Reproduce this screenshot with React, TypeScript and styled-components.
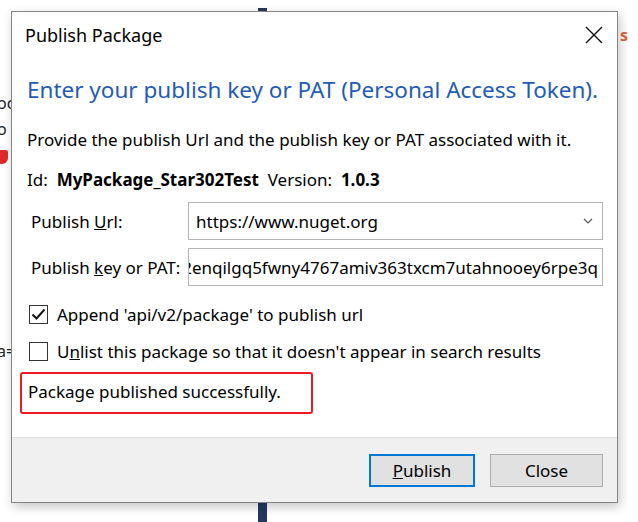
import React from "react";
import styled, { createGlobalStyle } from "styled-components";

const GlobalStyle = createGlobalStyle`
  html, body {
    margin: 0;
    padding: 0;
    background: #fff;
  }
  body {
    font-family: "Noto Sans", "Open Sans", sans-serif;
    color: #000;
  }
`;

const App = () => {
  return (
    <>
      <GlobalStyle />
      <Page>
        <Backdrop>
          <Bar />
          <Fragment style={{ top: 92 }}>oc</Fragment>
          <Fragment style={{ top: 118 }}>o</Fragment>
          <Shield style={{ top: 150 }} />
          <Fragment style={{ top: 340 }}>a=</Fragment>
          <RedFragment>s</RedFragment>
        </Backdrop>

        <Dialog>
          <TitleBar>
            <Title>Publish Package</Title>
            <CloseIcon width="18" height="18" viewBox="0 0 18 18">
              <path d="M1 1 L17 17 M17 1 L1 17" stroke="#111" strokeWidth="1.4" />
            </CloseIcon>
          </TitleBar>

          <Body>
            <Heading>Enter your publish key or PAT (Personal Access Token).</Heading>
            <Line $gap={23}>Provide the publish Url and the publish key or PAT associated with it.</Line>
            <Line $gap={18}>
              Id:&nbsp;&nbsp;<b>MyPackage_Star302Test</b>&nbsp;&nbsp;Version:&nbsp;&nbsp;<b>1.0.3</b>
            </Line>

            <Form>
              <Label>
                <span>
                  Publish <u>U</u>rl:
                </span>
              </Label>
              <Field>
                <span>https://www.nuget.org</span>
                <Chevron width="10" height="6" viewBox="0 0 10 6">
                  <path d="M1 1 L5 5 L9 1" fill="none" stroke="#555" strokeWidth="1.2" />
                </Chevron>
              </Field>

              <Label>
                <span>
                  Publish <u>k</u>ey or PAT:
                </span>
              </Label>
              <Field $clip>
                <span>2enqilgq5fwny4767amiv363txcm7utahnooey6rpe3q</span>
              </Field>
            </Form>

            <CheckRow>
              <Box>
                <svg width="15" height="13" viewBox="0 0 15 13">
                  <path d="M1.5 6.5 L5.5 10.5 L13.5 1.5" fill="none" stroke="#111" strokeWidth="2" />
                </svg>
              </Box>
              <span>Append 'api/v2/package' to publish url</span>
            </CheckRow>
            <CheckRow>
              <Box />
              <span>
                U<u>n</u>list this package so that it doesn't appear in search results
              </span>
            </CheckRow>

            <Status>Package published successfully.</Status>
          </Body>

          <Footer>
            <Button $primary>
              <span>
                <u>P</u>ublish
              </span>
            </Button>
            <Button>Close</Button>
          </Footer>
        </Dialog>
      </Page>
    </>
  );
};

/**
 * styles
 */

const Page = styled.div`
  position: relative;
  width: 638px;
  height: 522px;
  padding: 11px 0 0 11px;
  box-sizing: border-box;
  overflow: hidden;
`;

const Backdrop = styled.div`
  position: absolute;
  inset: 0;
  font-family: "Noto Sans", sans-serif;
  font-size: 16px;
`;

const Bar = styled.div`
  position: absolute;
  left: 258px;
  top: 8px;
  width: 9px;
  height: 514px;
  background: #23395d;
`;

const Fragment = styled.div`
  position: absolute;
  left: -3px;
  color: #222;
`;

const RedFragment = styled.div`
  position: absolute;
  left: 620px;
  top: 24px;
  color: #e0603a;
  font-weight: 700;
`;

const Shield = styled.div`
  position: absolute;
  left: -4px;
  width: 12px;
  height: 14px;
  background: #e02a2a;
  border-radius: 2px 2px 6px 6px;
`;

const Dialog = styled.div`
  position: relative;
  width: 607px;
  height: 492px;
  box-sizing: border-box;
  display: flex;
  flex-direction: column;
  background: #fff;
  border: 1px solid #858585;
  box-shadow: 2px 4px 10px rgba(0, 0, 0, 0.22);
`;

const TitleBar = styled.div`
  display: flex;
  align-items: center;
  justify-content: space-between;
  height: 46px;
  padding: 0 14px 0 13px;
`;

const Title = styled.div`
  font-size: 18px;
  color: #000;
`;

const CloseIcon = styled.svg`
  display: block;
`;

const Body = styled.div`
  flex: 1;
  display: flex;
  flex-direction: column;
  padding: 16px 14px 0 15px;
`;

const Heading = styled.div`
  font-size: 22.5px;
  color: #1f5cb5;
  line-height: 32px;
  white-space: nowrap;
`;

const Line = styled.div<{ $gap: number }>`
  font-size: 17px;
  line-height: 22px;
  margin-top: ${(p) => p.$gap}px;
  white-space: nowrap;

  b {
    font-weight: 700;
  }
`;

const Form = styled.div`
  display: grid;
  grid-template-columns: 161px 1fr;
  row-gap: 8px;
  margin-top: 11px;
  margin-bottom: 10px;
`;

const Label = styled.div`
  display: flex;
  align-items: center;
  padding-left: 4px;
  font-size: 17px;
  white-space: nowrap;
`;

const Field = styled.div<{ $clip?: boolean }>`
  height: 38px;
  box-sizing: border-box;
  border: 1px solid #b4b4b4;
  display: flex;
  align-items: center;
  justify-content: ${(p) => (p.$clip ? "flex-end" : "space-between")};
  padding: ${(p) => (p.$clip ? "0 4px 0 0" : "0 9px 0 7px")};
  overflow: hidden;
  white-space: nowrap;
  font-size: 17px;
`;

const Chevron = styled.svg`
  display: block;
  flex-shrink: 0;
`;

const CheckRow = styled.div`
  display: flex;
  align-items: center;
  gap: 9px;
  height: 37px;
  padding-left: 2px;
  font-size: 17px;
  white-space: nowrap;
`;

const Box = styled.div`
  width: 19px;
  height: 19px;
  box-sizing: border-box;
  border: 1px solid #333;
  display: flex;
  align-items: center;
  justify-content: center;
  background: #fff;
`;

const Status = styled.div`
  width: 293px;
  height: 42px;
  box-sizing: border-box;
  margin: 2px 0 0 -7px;
  border: 2px solid #f0191e;
  border-radius: 3px;
  padding: 0 0 4px 6px;
  display: flex;
  align-items: center;
  font-size: 17px;
  white-space: nowrap;
`;

const Footer = styled.div`
  height: 65px;
  box-sizing: border-box;
  border-top: 1px solid #dfdfdf;
  background: #f0f0f0;
  display: flex;
  align-items: center;
  justify-content: flex-end;
  gap: 15px;
  padding: 0 14px 0 0;
`;

const Button = styled.div<{ $primary?: boolean }>`
  width: ${(p) => (p.$primary ? "106px" : "113px")};
  height: 33px;
  box-sizing: border-box;
  display: flex;
  align-items: center;
  justify-content: center;
  background: #e1e1e1;
  border: ${(p) => (p.$primary ? "2px solid #0078d7" : "1px solid #adadad")};
  font-size: 17px;
`;

export default App;
